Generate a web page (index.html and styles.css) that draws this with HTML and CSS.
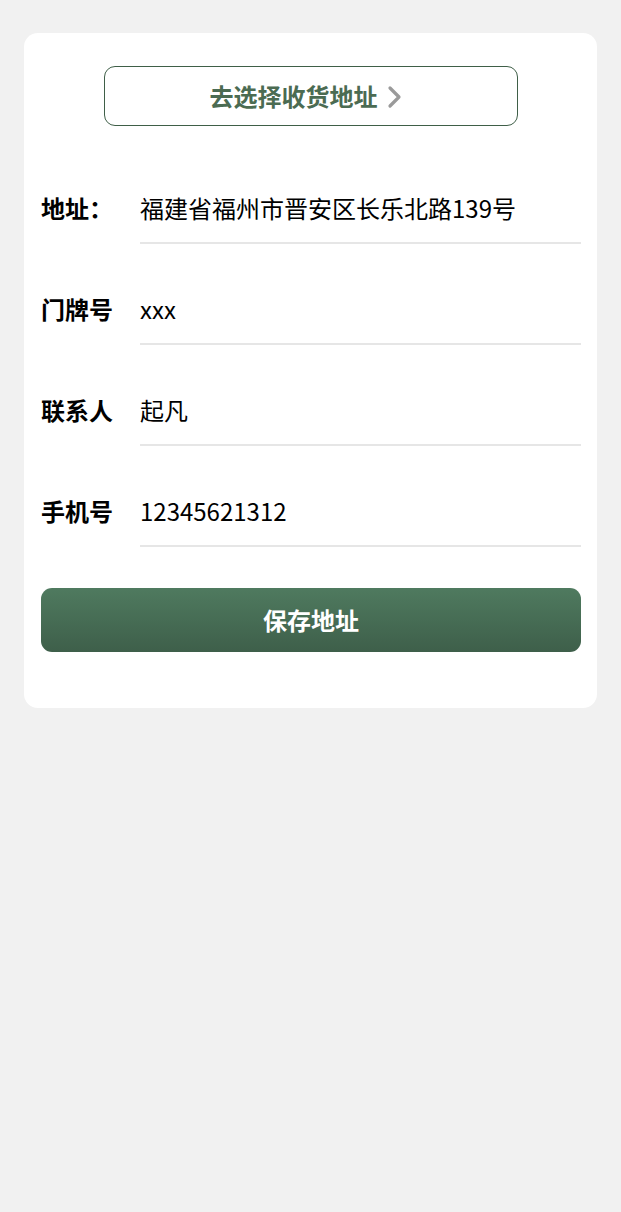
FILE: index.html
```html
<!DOCTYPE html>
<html lang="zh-CN">
<head>
<meta charset="utf-8">
<title>收货地址</title>
<link rel="stylesheet" href="styles.css">
</head>
<body>
<div class="card">
  <div class="pick-wrap">
    <button class="pick-btn" type="button">
      <span class="pick-text">去选择收货地址</span>
      <svg class="chev" width="16" height="24" viewBox="0 0 16 24"><path d="M3 3 L12 12 L3 21" fill="none" stroke="#9a9a9a" stroke-width="3.2" stroke-linecap="round" stroke-linejoin="round"/></svg>
    </button>
  </div>
  <div class="form">
    <div class="row"><div class="label">地址：</div><div class="field">福建省福州市晋安区长乐北路139号</div></div>
    <div class="row"><div class="label">门牌号</div><div class="field">xxx</div></div>
    <div class="row"><div class="label">联系人</div><div class="field">起凡</div></div>
    <div class="row"><div class="label">手机号</div><div class="field">12345621312</div></div>
  </div>
  <button class="save-btn" type="button">保存地址</button>
</div>
</body>
</html>
```

FILE: styles.css
```css
html, body {
  margin: 0;
  padding: 0;
  background: #f1f1f1;
}
body {
  font-family: "Noto Sans CJK SC", "Noto Sans", sans-serif;
  padding: 33px 24px 0;
  min-height: 1212px;
  box-sizing: border-box;
}
.card {
  background: #ffffff;
  border-radius: 14px;
  padding: 33px 16px 56px 17px;
}
.pick-wrap {
  display: flex;
  justify-content: center;
}
.pick-btn {
  width: 414px;
  height: 60px;
  box-sizing: border-box;
  border: 1px solid #3f5f48;
  border-radius: 11px;
  background: #fff;
  display: flex;
  align-items: center;
  justify-content: center;
  gap: 9px;
  padding: 0 10px 0 0;
  font-family: inherit;
}
.pick-text {
  font-size: 24px;
  font-weight: 700;
  color: #4b6b52;
  line-height: 1;
}
.chev {
  display: block;
  margin-top: 1px;
}
.form {
  display: flex;
  flex-direction: column;
  gap: 35px;
  margin-top: 52px;
}
.row {
  display: flex;
  align-items: stretch;
}
.label {
  width: 99px;
  flex: none;
  font-size: 24px;
  font-weight: 700;
  color: #000;
  line-height: 60px;
  padding-bottom: 4px;
}
.field {
  flex: 1;
  height: 60px;
  padding-bottom: 4px;
  line-height: 60px;
  font-size: 24px;
  color: #000;
  border-bottom: 2px solid #e6e6e6;
}
.save-btn {
  display: block;
  width: 100%;
  height: 64px;
  margin-top: 41px;
  border: none;
  border-radius: 11px;
  background: linear-gradient(180deg, #4f7a5f 0%, #3e5f4a 100%);
  color: #fff;
  font-family: inherit;
  font-size: 24px;
  font-weight: 700;
  padding: 0 0 2px;
}
```
